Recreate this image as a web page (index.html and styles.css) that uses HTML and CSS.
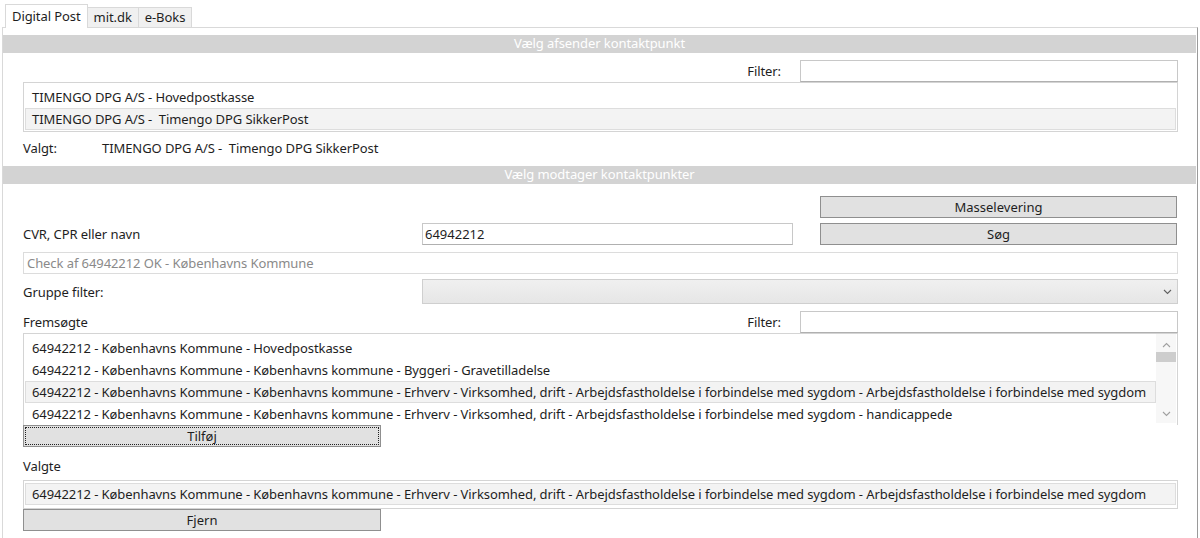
FILE: index.html
```html
<!DOCTYPE html>
<html lang="da">
<head>
    <meta charset="UTF-8">
    <meta name="viewport" content="width=device-width, initial-scale=1.0">
    <title>Digital Post</title>
    <link rel="stylesheet" href="styles.css">
</head>
<body>

    <div class="tabs">
        <div class="tab active">Digital Post</div>
        <div class="tab">mit.dk</div>
        <div class="tab">e-Boks</div>
    </div>

    <div class="panel">
        <div class="bar">Vælg afsender kontaktpunkt</div>

        <div class="section">
            <div class="filter-row">
                <span class="spacer"></span>
                <label class="filter-label">Filter:</label>
                <input type="text" class="filter-input">
            </div>

            <div class="listbox list-sender">
                <div class="item">TIMENGO DPG A/S - Hovedpostkasse</div>
                <div class="item selected">TIMENGO DPG A/S -&nbsp; Timengo DPG SikkerPost</div>
            </div>

            <div class="chosen">
                <span class="chosen-label">Valgt:</span>
                <span>TIMENGO DPG A/S -&nbsp; Timengo DPG SikkerPost</span>
            </div>
        </div>

        <div class="bar">Vælg modtager kontaktpunkter</div>

        <div class="section">
            <div class="row row-top">
                <span class="col-label"></span>
                <span class="col-input"></span>
                <button class="btn col-btn">Masselevering</button>
            </div>
            <div class="row">
                <label class="col-label">CVR, CPR eller navn</label>
                <input type="text" class="textbox col-input" value="64942212">
                <button class="btn col-btn">Søg</button>
            </div>

            <div class="status">Check af 64942212 OK - Københavns Kommune</div>

            <div class="row row-combo">
                <label class="col-label">Gruppe filter:</label>
                <div class="combo">
                    <svg width="9" height="6" viewBox="0 0 9 6"><path d="M1 1 L4.5 4.5 L8 1" fill="none" stroke="#606060" stroke-width="1.1"/></svg>
                </div>
            </div>

            <div class="filter-row filter-found">
                <label>Fremsøgte</label>
                <span class="spacer"></span>
                <label class="filter-label">Filter:</label>
                <input type="text" class="filter-input">
            </div>

            <div class="listbox list-found">
                <div class="items">
                    <div class="item">64942212 - Københavns Kommune - Hovedpostkasse</div>
                    <div class="item">64942212 - Københavns Kommune - Københavns kommune - Byggeri - Gravetilladelse</div>
                    <div class="item selected">64942212 - Københavns Kommune - Københavns kommune - Erhverv - Virksomhed, drift - Arbejdsfastholdelse i forbindelse med sygdom - Arbejdsfastholdelse i forbindelse med sygdom</div>
                    <div class="item">64942212 - Københavns Kommune - Københavns kommune - Erhverv - Virksomhed, drift - Arbejdsfastholdelse i forbindelse med sygdom - handicappede</div>
                </div>
                <div class="scrollbar">
                    <svg class="arrow" width="9" height="6" viewBox="0 0 9 6"><path d="M1 5 L4.5 1.5 L8 5" fill="none" stroke="#a0a0a0" stroke-width="1.1"/></svg>
                    <div class="thumb"></div>
                    <span class="spacer"></span>
                    <svg class="arrow" width="9" height="6" viewBox="0 0 9 6"><path d="M1 1 L4.5 4.5 L8 1" fill="none" stroke="#a0a0a0" stroke-width="1.1"/></svg>
                </div>
            </div>

            <button class="btn btn-small focused">Tilføj</button>

            <div class="label-valgte">Valgte</div>

            <div class="listbox list-chosen">
                <div class="item selected">64942212 - Københavns Kommune - Københavns kommune - Erhverv - Virksomhed, drift - Arbejdsfastholdelse i forbindelse med sygdom - Arbejdsfastholdelse i forbindelse med sygdom</div>
            </div>

            <button class="btn btn-small">Fjern</button>
        </div>
    </div>

</body>
</html>
```

FILE: styles.css
```css
body { margin: 0; width: 1200px; height: 538px; overflow: hidden; background: #ffffff; font-family: "Noto Sans", "Open Sans", sans-serif; font-size: 13px; letter-spacing: -0.08px; color: #1e1e1e; }

.tabs { display: flex; align-items: flex-end; height: 27px; padding-left: 5px; }
.tab { height: 19px; line-height: 18px; padding: 0 6px; background: #f0f0f0; border: 1px solid #d9d9d9; border-bottom: none; margin-left: -1px; }
.tab.active { height: 23px; line-height: 22px; background: #ffffff; margin-left: 0; position: relative; top: 1px; z-index: 1; }

.panel { margin-left: 2px; width: 1194px; height: 508px; border: 1px solid #d9d9d9; border-right: 1px solid #9a9a9a; padding-top: 7px; }

.bar { height: 18px; line-height: 17px; background: #d3d3d3; color: #ffffff; text-align: center; margin: 0 1px 0 0; }

.section { padding: 0 19px 0 20px; }

.filter-row { display: flex; align-items: center; height: 22px; margin-top: 7px; }
.spacer { flex: 1; }
.filter-label { margin-right: 19px; }
.filter-input { box-sizing: border-box; width: 378px; height: 22px; margin: 0; border: 1px solid #c8c8c8; border-bottom-color: #b0b0b0; font: inherit; }

.listbox { box-sizing: border-box; border: 1px solid #d4d4d4; padding: 3px 1px 0 1px; background: #ffffff; }
.list-sender { height: 50px; }
.item { box-sizing: border-box; height: 22px; line-height: 20px; padding: 0 6px; border: 1px solid transparent; white-space: nowrap; overflow: hidden; }
.item.selected { background: #f3f3f3; border-color: #dddddd; }

.chosen { display: flex; height: 20px; line-height: 20px; margin-top: 6px; }
.chosen-label { width: 79px; }

.section + .bar { margin-top: 8px; }

.row { display: flex; align-items: center; height: 22px; }
.row-top { margin-top: 12px; margin-bottom: 5px; }
.col-label { width: 399px; }
.col-input { width: 371px; margin-right: 27px; }
.col-btn { width: 357px; }

.textbox { box-sizing: border-box; height: 22px; margin-top: 0; margin-bottom: 0; margin-left: 0; border: 1px solid #c8c8c8; border-bottom-color: #b0b0b0; padding: 0 2px; font: inherit; color: #1e1e1e; }

.btn { box-sizing: border-box; height: 22px; padding: 0; margin: 0; background: #e1e1e1; border: 1px solid #8f8f8f; font: inherit; color: #1e1e1e; line-height: 18px; }

.status { box-sizing: border-box; height: 22px; line-height: 20px; margin-top: 7px; padding: 0 3px; border: 1px solid #dcdcdc; color: #8a8a8a; }

.row-combo { height: 25px; margin-top: 5px; }
.combo { box-sizing: border-box; flex: 1; height: 25px; display: flex; align-items: center; justify-content: flex-end; padding-right: 5px; background: linear-gradient(#f0f0f0, #e6e6e6); border: 1px solid #cfcfcf; }

.filter-found { margin-top: 7px; }

.list-found { display: flex; height: 92px; overflow: hidden; border-bottom: none; }
.items { flex: 1; min-width: 0; }
.scrollbar { display: flex; flex-direction: column; align-items: center; width: 20px; height: 89px; background: #f7f7f7; margin-top: -3px; padding: 8px 0 0 0; box-sizing: border-box; }
.thumb { width: 20px; height: 10px; background: #cdcdcd; margin-top: 4px; }
.scrollbar .spacer { flex: 1; }
.scrollbar .arrow:last-child { margin-bottom: 6px; }

.btn-small { display: block; width: 358px; height: 22px; }
.focused { outline: 1px dotted #202020; outline-offset: -3px; }

.label-valgte { height: 20px; line-height: 20px; margin-top: 9px; }
.list-chosen { height: 29px; margin-top: 4px; padding-top: 2px; }
```
